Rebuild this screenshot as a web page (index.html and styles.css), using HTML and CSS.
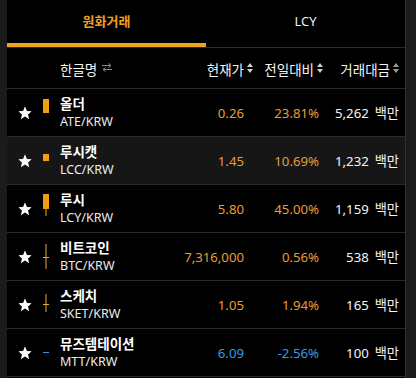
FILE: index.html
```html
<!DOCTYPE html>
<html lang="ko">
<head>
<meta charset="utf-8">
<link rel="stylesheet" href="styles.css">
</head>
<body>
<div class="panel">
  <div class="tabs">
    <div class="tab active">원화거래</div>
    <div class="tab">LCY</div>
  </div>
  <div class="thead grid">
    <div></div><div></div>
    <div class="h-name">한글명 <svg class="swap" viewBox="0 0 12 9" width="12" height="9"><path d="M1 2.5h9M7.5 0.5l2.5 2-2.5 2M11 6.5H2M4.5 4.5L2 6.5l2.5 2" fill="none" stroke="#8a8a8a" stroke-width="1"/></svg></div>
    <div class="h-num h-price">현재가<svg class="sort" viewBox="0 0 6 10" width="6" height="10"><path d="M3 0L6 4H0z M3 10L0 6h6z" fill="#d0d0d0"/></svg></div>
    <div class="h-num h-chg">전일대비<svg class="sort" viewBox="0 0 6 10" width="6" height="10"><path d="M3 0L6 4H0z M3 10L0 6h6z" fill="#d0d0d0"/></svg></div>
    <div class="h-num h-vol">거래대금<svg class="sort" viewBox="0 0 6 10" width="6" height="10"><path d="M3 0L6 4H0z M3 10L0 6h6z" fill="#9a9a9a"/></svg></div>
  </div>

  <div class="row grid">
    <div class="star"><svg viewBox="0 0 24 24" width="16" height="16"><path d="M12 2l2.9 6.9 7.1.6-5.4 4.7 1.6 7-6.2-3.8-6.2 3.8 1.6-7L2 9.5l7.1-.6z" fill="#fff"/></svg></div>
    <div class="candle"><svg viewBox="0 0 6 47" width="6" height="47"><rect x="0" y="10" width="6" height="14" fill="#f29d12"/></svg></div>
    <div class="name"><span class="kr">올더</span><span class="sym">ATE/KRW</span></div>
    <div class="num up">0.26</div>
    <div class="num up">23.81%</div>
    <div class="num vol">5,262<span class="unit">백만</span></div>
  </div>

  <div class="row grid hl">
    <div class="star"><svg viewBox="0 0 24 24" width="16" height="16"><path d="M12 2l2.9 6.9 7.1.6-5.4 4.7 1.6 7-6.2-3.8-6.2 3.8 1.6-7L2 9.5l7.1-.6z" fill="#fff"/></svg></div>
    <div class="candle"><svg viewBox="0 0 6 47" width="6" height="47"><rect x="0" y="17" width="6" height="7" fill="#f29d12"/></svg></div>
    <div class="name"><span class="kr">루시캣</span><span class="sym">LCC/KRW</span></div>
    <div class="num up">1.45</div>
    <div class="num up">10.69%</div>
    <div class="num vol">1,232<span class="unit">백만</span></div>
  </div>

  <div class="row grid">
    <div class="star"><svg viewBox="0 0 24 24" width="16" height="16"><path d="M12 2l2.9 6.9 7.1.6-5.4 4.7 1.6 7-6.2-3.8-6.2 3.8 1.6-7L2 9.5l7.1-.6z" fill="#fff"/></svg></div>
    <div class="candle"><svg viewBox="0 0 6 47" width="6" height="47"><rect x="0" y="9" width="6" height="15" fill="#f29d12"/><rect x="2.5" y="24" width="1" height="7" fill="#e9a645"/></svg></div>
    <div class="name"><span class="kr">루시</span><span class="sym">LCY/KRW</span></div>
    <div class="num up">5.80</div>
    <div class="num up">45.00%</div>
    <div class="num vol">1,159<span class="unit">백만</span></div>
  </div>

  <div class="row grid">
    <div class="star"><svg viewBox="0 0 24 24" width="16" height="16"><path d="M12 2l2.9 6.9 7.1.6-5.4 4.7 1.6 7-6.2-3.8-6.2 3.8 1.6-7L2 9.5l7.1-.6z" fill="#fff"/></svg></div>
    <div class="candle"><svg viewBox="0 0 6 47" width="6" height="47"><rect x="2.5" y="11" width="1" height="25" fill="#e9a645"/><rect x="0" y="24" width="6" height="1" fill="#e9a645"/></svg></div>
    <div class="name"><span class="kr">비트코인</span><span class="sym">BTC/KRW</span></div>
    <div class="num up">7,316,000</div>
    <div class="num up">0.56%</div>
    <div class="num vol">538<span class="unit">백만</span></div>
  </div>

  <div class="row grid">
    <div class="star"><svg viewBox="0 0 24 24" width="16" height="16"><path d="M12 2l2.9 6.9 7.1.6-5.4 4.7 1.6 7-6.2-3.8-6.2 3.8 1.6-7L2 9.5l7.1-.6z" fill="#fff"/></svg></div>
    <div class="candle"><svg viewBox="0 0 6 47" width="6" height="47"><rect x="2.5" y="13" width="1" height="18" fill="#e9a645"/><rect x="0" y="23" width="6" height="1" fill="#e9a645"/></svg></div>
    <div class="name"><span class="kr">스케치</span><span class="sym">SKET/KRW</span></div>
    <div class="num up">1.05</div>
    <div class="num up">1.94%</div>
    <div class="num vol">165<span class="unit">백만</span></div>
  </div>

  <div class="row grid">
    <div class="star"><svg viewBox="0 0 24 24" width="16" height="16"><path d="M12 2l2.9 6.9 7.1.6-5.4 4.7 1.6 7-6.2-3.8-6.2 3.8 1.6-7L2 9.5l7.1-.6z" fill="#fff"/></svg></div>
    <div class="candle"><svg viewBox="0 0 6 47" width="6" height="47"><rect x="0" y="23" width="6" height="1" fill="#3f94d8"/></svg></div>
    <div class="name"><span class="kr">뮤즈템테이션</span><span class="sym">MTT/KRW</span></div>
    <div class="num down">6.09</div>
    <div class="num down">-2.56%</div>
    <div class="num vol">100<span class="unit">백만</span></div>
  </div>
</div>
</body>
</html>
```

FILE: styles.css
```css
html, body {
  margin: 0;
  padding: 0;
  height: 100%;
}
body {
  background: #1b1b1b;
  font-family: "Noto Sans", "Noto Sans CJK KR", sans-serif;
  color: #f2f2f2;
  overflow: hidden;
}
.panel {
  margin-left: 7px;
  width: 398px;
  height: 100%;
  background: #000;
  border-right: 1px solid #303030;
}
.tabs {
  display: flex;
  height: 47px;
  border-bottom: 1px solid #2c2c2c;
}
.tab {
  flex: 1;
  display: flex;
  align-items: center;
  justify-content: center;
  padding-bottom: 6px;
  box-sizing: border-box;
  font-size: 13px;
  color: #f0f0f0;
}
.tab.active {
  color: #f0a01e;
  font-weight: bold;
  box-shadow: inset 0 -4px 0 #f0a31e;
}
.grid {
  display: grid;
  grid-template-columns: 34px 19px 94px 90px 75px 80px;
  padding-right: 6px;
}
.thead {
  height: 39px;
  border-bottom: 1px solid #2a2a2a;
  align-items: center;
  font-size: 13.5px;
  color: #f4f4f4;
  padding-top: 1px;
}
.h-name {
  display: flex;
  align-items: center;
  gap: 2px;
}
.swap { margin-left: 2px; margin-top: -2px; }
.h-num {
  display: flex;
  align-items: center;
  justify-content: flex-end;
  white-space: nowrap;
}
.sort { margin-left: 3px; margin-top: -2px; }
.h-price { margin-right: -9px; }
.h-chg { margin-right: -4px; }
.h-vol { margin-right: 0; }
.row {
  height: 47px;
  border-bottom: 1px solid #2a2a2a;
  align-items: center;
}
.row.hl { background: #161616; }
.star {
  display: flex;
  justify-content: center;
  padding-left: 1px;
}
.candle {
  align-self: stretch;
  display: flex;
  padding-left: 2px;
}
.name {
  align-self: stretch;
  display: flex;
  flex-direction: column;
  padding-top: 6px;
  white-space: nowrap;
}
.kr {
  font-size: 13.5px;
  font-weight: bold;
  line-height: 18px;
  color: #fff;
}
.sym {
  font-size: 12.5px;
  line-height: 18px;
  color: #ececec;
}
.num {
  text-align: right;
  font-size: 13.2px;
  white-space: nowrap;
}
.up { color: #e89c34; }
.down { color: #3d98e0; }
.vol { color: #f4f4f4; }
.unit { margin-left: 6px; }
```
